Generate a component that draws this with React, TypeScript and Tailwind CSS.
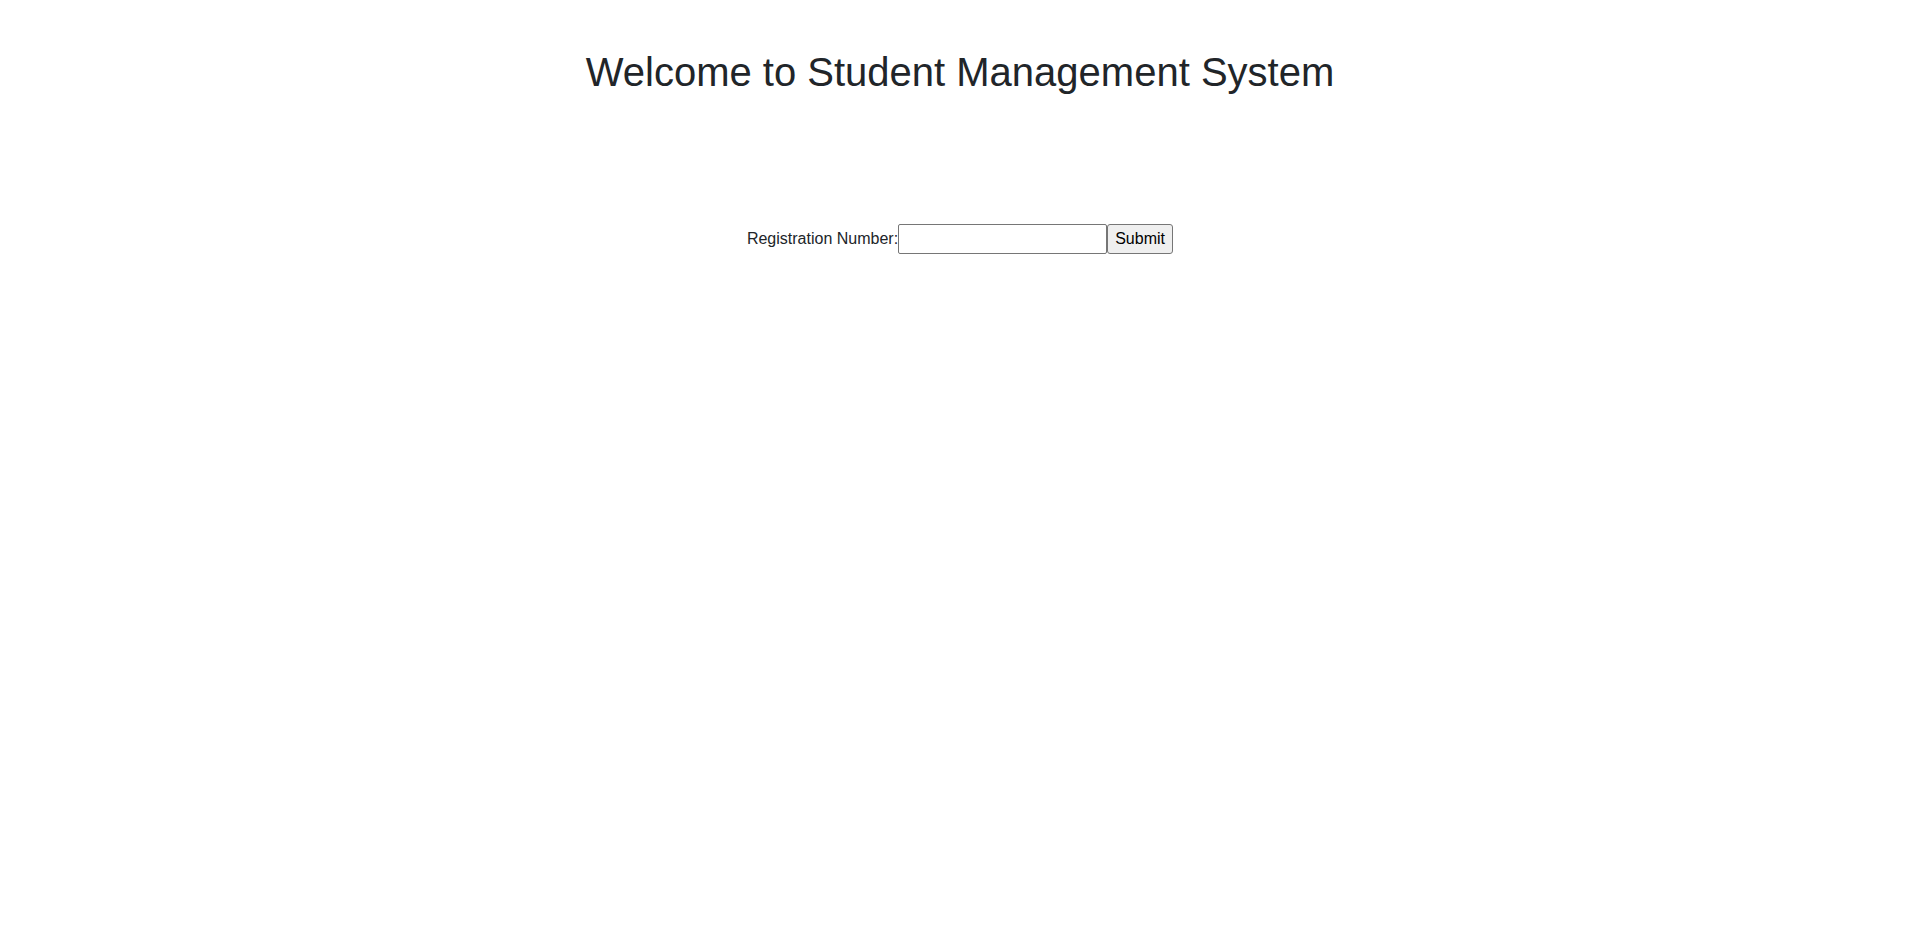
export default function App() {
  return (
    <div className="min-h-screen bg-white font-['Liberation_Sans',Arial,sans-serif] text-[#212529]">
      <h1 className="pt-[48px] text-center text-[40px] font-normal leading-[48px]">
        Welcome to Student Management System
      </h1>
      <form
        className="mt-[128px] flex items-center justify-center text-base"
        onSubmit={(e) => e.preventDefault()}
      >
        <label htmlFor="reg">Registration Number:</label>
        <input
          id="reg"
          type="text"
          className="h-[30px] w-[209px] rounded-[2px] border border-[#767676] bg-white px-[2px] outline-none"
        />
        <button
          type="submit"
          className="h-[30px] w-[66px] rounded-[3px] border border-[#767676] bg-[#efefef] text-black"
        >
          Submit
        </button>
      </form>
    </div>
  )
}
